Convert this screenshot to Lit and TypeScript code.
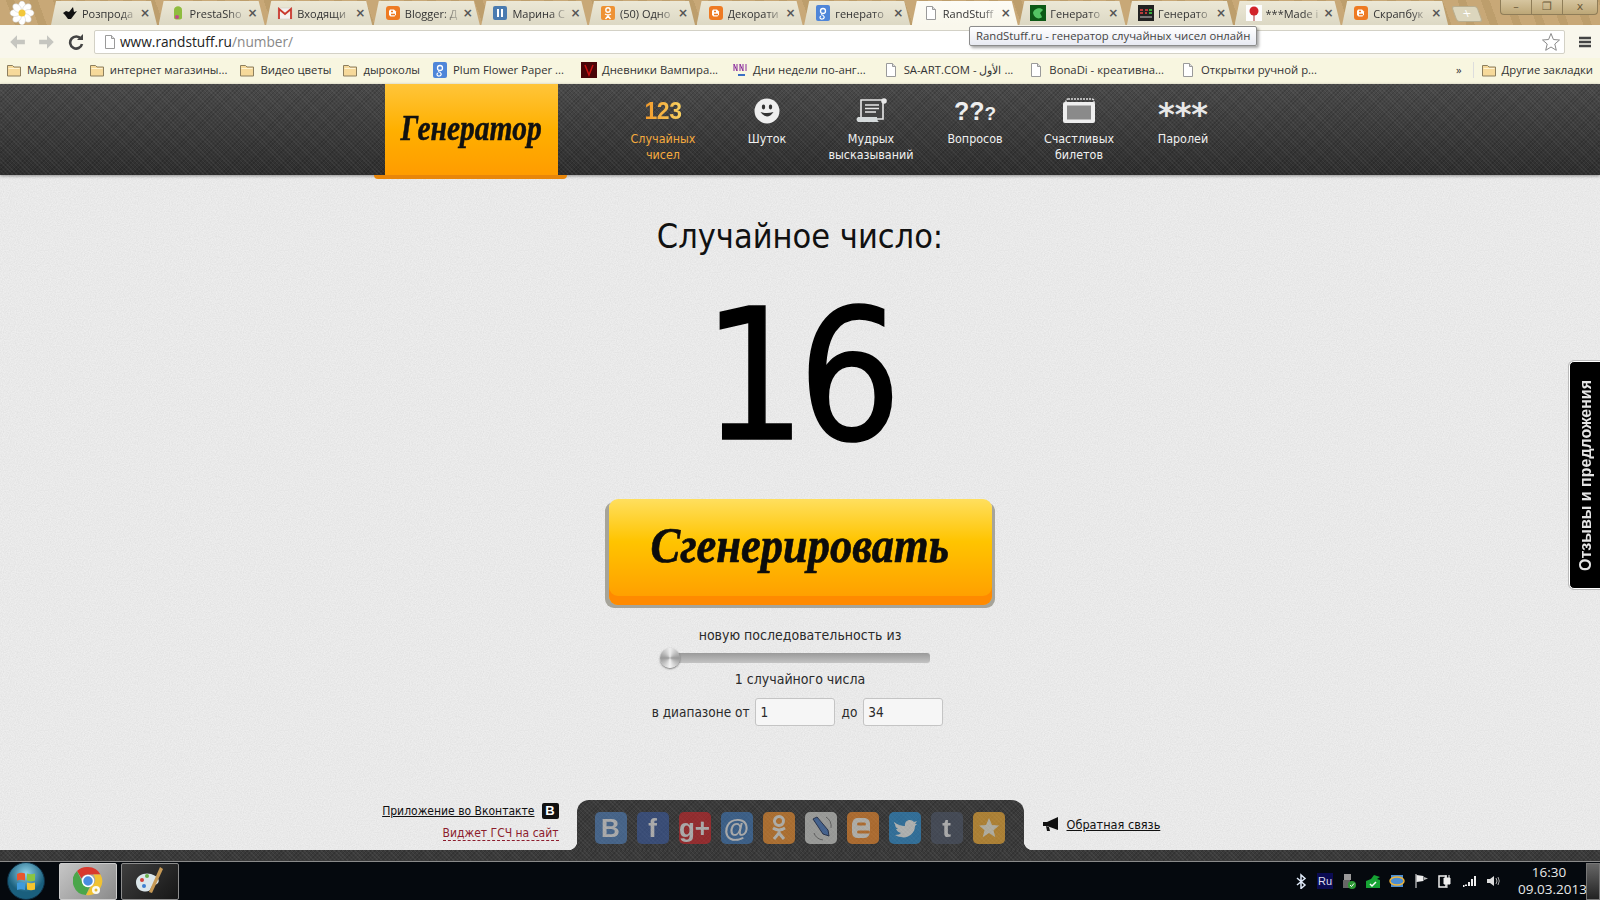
import { LitElement, css, html, svg } from 'lit';
import { customElement } from 'lit/decorators.js';

const doc = svg`<path d="M3.5 1.5h6l3 3v10h-9z" fill="#fff" stroke="#9a9a9a"/><path d="M9.5 1.5v3h3" fill="#ddd" stroke="#9a9a9a"/>`;
const blogger = svg`<rect x="1" y="1" width="14" height="14" rx="3" fill="#ee7a22"/><path d="M5 4.5h4l2 2v3l-1.5 2h-4L4 10V6z" fill="#fff"/><path d="M6 6.500h2M6 9.500h4" stroke="#ee7a22" stroke-width="1.300"/>`;

const favicons: Record<string, unknown> = {
  bird: svg`<path d="M1 8l3-2 3 1 4-5 1 5 3-1-3 4-3 4H6L3 10z" fill="#111"/>`,
  presta: svg`<path d="M4 5c0-5 8-5 8 0v8c0 2-8 2-8 0z" fill="#8fbc3e"/><circle cx="7" cy="12" r="2" fill="#c2488a"/>`,
  gmail: svg`<rect x="1" y="3" width="14" height="11" fill="#f4f0ee" stroke="#c9c2c0" stroke-width=".5"/><path d="M2 14V4l6 5 6-5v10" fill="none" stroke="#c9372c" stroke-width="1.800"/>`,
  blogger,
  pause: svg`<rect x="1" y="1" width="14" height="14" rx="2" fill="#4a7bb0"/><path d="M5 4h2v8H5zM9 4h2v8H9z" fill="#fff"/>`,
  ok: svg`<rect x="1" y="1" width="14" height="14" rx="2" fill="#ee9233"/><circle cx="8" cy="5" r="2.200" fill="none" stroke="#fff" stroke-width="1.400"/><path d="M5 9q3 2 6 0M8 10v1l-2.500 3M8 11l2.500 3" fill="none" stroke="#fff" stroke-width="1.400"/>`,
  google: svg`<rect x="1" y="0" width="14" height="16" rx="2" fill="#4f86d9"/><circle cx="8" cy="6" r="2.500" fill="none" stroke="#fff" stroke-width="1.300"/><path d="M6 9.500c4 1 4 4 1.500 4.500S4 12 6 11" fill="none" stroke="#fff" stroke-width="1.200"/>`,
  doc,
  green: svg`<rect x="0" y="0" width="16" height="16" fill="#0d5a16"/><path d="M3 8c1-5 8-6 10-3l-3 3 2 4c-3 3-8 1-9-4z" fill="#53c463"/>`,
  dark: svg`<rect x="0" y="0" width="16" height="16" fill="#222"/><path d="M2 5h3M2 8h3M7 5h3M7 8h2" stroke="#e44" stroke-width="1.500"/><path d="M11 5h3M11 8h3" stroke="#4d4" stroke-width="1.500"/><path d="M2 12h12" stroke="#ccc"/>`,
  balloon: svg`<rect x="0" y="0" width="16" height="16" fill="#fdfdfd"/><circle cx="8" cy="6" r="4.500" fill="#d2232a"/><path d="M8 10v6" stroke="#a33"/>`,
};

const folder = svg`<path d="M1.500 3.500h5l1.500 1.500h6.500v9h-13z" fill="#f6d99a" stroke="#8d7f5e"/><path d="M2.500 6.500h11" stroke="#fff3d0"/>`;

const tabs = [
  ['bird', 'Розпрода'], ['presta', 'PrestaSho'], ['gmail', 'Входящи'], ['blogger', 'Blogger: Д'],
  ['pause', 'Марина С'], ['ok', '(50) Одно'], ['blogger', 'Декорати'], ['google', 'генерато'],
  ['doc', 'RandStuff'], ['green', 'Генерато'], ['dark', 'Генерато'], ['balloon', '***Made i'], ['blogger', 'Скрапбук'],
];

const marks: [unknown, string, number][] = [
  [folder, 'Марьяна', 12], [folder, 'интернет магазины...', 12], [folder, 'Видео цветы', 11], [folder, 'дыроколы', 12],
  [favicons.google, 'Plum Flower Paper ...', 17], [svg`<rect x="0" y="0" width="16" height="16" fill="#4a0508"/><path d="M4 3l4 10 4-10" fill="none" stroke="#c11" stroke-width="1.500"/>`, 'Дневники Вампира...', 14],
  [svg`<path d="M2 2v7M5 2v7M2 2l3 7M8 2v7M11 2v7M8 2l3 7M14 2v7" stroke="#8a2a9c" fill="none"/><path d="M6 13h7" stroke="#3a6fc4" stroke-width="2"/>`, 'Дни недели по-анг...', 17], [doc, 'SA-ART.COM - الأول ...', 15],
  [doc, 'BonaDi - креативна...', 16], [doc, 'Открытки ручной р...', 0],
];

const socials: [string, string, unknown][] = [
  ['#4f7fb8', 'В', null], ['#3b5a9c', 'f', null], ['#c8272b', 'g+', null], ['#3f77b5', '@', null],
  ['#ee8f2e', '', svg`<circle cx="16" cy="9" r="4.500" fill="none" stroke="#f1f1ea" stroke-width="3"/><path d="M10 16q6 4 12 0M16 19v2l-5 6M16 21l5 6" fill="none" stroke="#f1f1ea" stroke-width="3"/>`],
  ['#d2d4d0', '', svg`<path d="M8 7l4-2 11 13 1 6-6-2z" fill="#4c7cc0" stroke="#1f2f55"/><path d="M21 5q6 4 5 11M9 21q2 6 9 7" fill="none" stroke="#777"/>`],
  ['#ef8a2c', '', svg`<path d="M10 6h8q5 1 5 6v8q-1 6-6 6h-6q-6 0-6-6v-8q1-6 5-6z" fill="#f3f1e8"/><path d="M11.500 12h6M11.500 20h10" stroke="#ef8a2c" stroke-width="3" stroke-linecap="round"/>`],
  ['#2f8fd0', '', svg`<path d="M5 10q5 4 11 4c-1-6 6-8 9-4l3-1-2 3 2 0-2 2c0 8-8 13-14 11-2 0-4-1-6-2 3 0 5-1 6-2-3-1-4-2-5-4h2c-2-1-3-3-3-5l2 1C5 12 5 11 5 10z" fill="#f2f6f4"/>`],
  ['#4c5566', 't', null],
  ['#f1ac35', '', svg`<path d="M16 6l3 7 7 .600-5.500 4.600 1.800 7L16 21l-6.300 4.200 1.800-7L6 13.600l7-.600z" fill="#f5f0dc"/>`],
];

const tray = [
  svg`<path d="M4 5l8 7-4 3.500V2l4 3.500L4 12" fill="none" stroke="#dfe9f8" stroke-width="1.500"/>`,
  svg`<rect x="0" y="0" width="16" height="16" fill="#0b0b52"/>`,
  svg`<rect x="3" y="1" width="7" height="6" fill="#999"/><rect x="2" y="7" width="7" height="8" fill="#666"/><circle cx="11" cy="12" r="4" fill="#2c9a34"/><path d="M9 12l1.500 1.500L13 10.500" stroke="#fff" fill="none"/>`,
  svg`<path d="M1 8l5-2 3-4 6 2-3 2 3 1v8H1z" fill="#16a334"/><path d="M5 11l2 2 4-4" stroke="#fff" stroke-width="1.500" fill="none"/>`,
  svg`<rect x="2" y="2" width="12" height="12" fill="#4c8ed2"/><ellipse cx="8" cy="8" rx="7" ry="4" fill="none" stroke="#f0b53a" stroke-width="1.500"/>`,
  svg`<path d="M3 1v14" stroke="#eee"/><path d="M3.500 2l7 1v5l-7 1z" fill="#eee"/><path d="M11 4l4 1.500L11 7z" fill="#bbb"/>`,
  svg`<path d="M2 3h7v11H2z" fill="none" stroke="#eee" stroke-width="1.500"/><path d="M7 5h6v6H7zM9 2v3M12 2v3M10 11v4" fill="#eee" stroke="#eee"/>`,
  svg`<path d="M2 13h1.500M5 13v-1.500M8 13V9M11 13V6M14 13V3" stroke="#eee" stroke-width="2"/>`,
  svg`<path d="M2 6h3l4-3v10L5 10H2z" fill="#ddd"/><path d="M11 5q2 3 0 6M13 4q2.500 4 0 8" stroke="#aaa" fill="none"/>`,
];

@customElement('app-root')
export class AppRoot extends LitElement {
  static styles = css`
    :host {
      display: flex;
      flex-direction: column;
      position: relative;
      width: 1600px;
      height: 900px;
      overflow: hidden;
      font-family: 'Open Sans', 'Liberation Sans', sans-serif;
      color: #222;
    }
    svg { display: block; flex: none; }

    /* browser chrome */
    .tabstrip {
      display: flex;
      height: 25px;
      flex: none;
      align-items: flex-end;
      background: repeating-linear-gradient(70deg, #c8a877 0 14px, #bd9e6c 14px 22px);
    }
    .flower { margin: 0 16px 0 9px; align-self: center; }
    .tab {
      flex: 0 0 107.6px;
      box-sizing: border-box;
      height: 24px;
      display: flex;
      align-items: center;
      gap: 4px;
      padding-left: 11px;
      font-size: 11px;
      color: #333;
      background: linear-gradient(#ece8d6, #dcd8c4);
      clip-path: polygon(5px 0, 100px 0, 106px 100%, 0 100%);
    }
    .tab.on { background: linear-gradient(#fdfcf6, #f9f7ec); }
    .tab .fav { width: 16px; height: 16px; }
    .title {
      width: 54px;
      white-space: nowrap;
      -webkit-mask-image: linear-gradient(90deg, #000 70%, rgba(0, 0, 0, 0.15));
      mask-image: linear-gradient(90deg, #000 70%, rgba(0, 0, 0, 0.15));
    }
    .close { font: bold 12px 'DejaVu Sans', sans-serif; color: #555; }
    .newtab {
      width: 24px;
      height: 14px;
      margin: 0 0 3px 4px;
      background: #dcd6bd;
      border: 1px solid #b9ae8f;
      border-radius: 3px;
      transform: skewX(20deg);
      font: 11px/13px 'DejaVu Sans', sans-serif;
      text-align: center;
      color: #fff;
    }
    .winbtns { margin: 0 2px 0 auto; align-self: flex-start; display: flex; height: 15px; }
    .winbtns span {
      width: 30px;
      border: 1px solid #8f7d58;
      border-top: 0;
      text-align: center;
      font: 11px/13px 'DejaVu Sans', sans-serif;
      color: #6b5a3a;
      background: linear-gradient(#d6c59f, #bda777);
    }
    .winbtns span:last-child { width: 34px; border-radius: 0 0 4px 0; }
    .winbtns span:first-child { border-radius: 0 0 0 4px; border-right: 0; }
    .winbtns span:nth-child(2) { border-right: 0; }

    .toolbar {
      height: 33px;
      flex: none;
      display: flex;
      align-items: center;
      background: #f9f7ec;
      padding: 0 8px;
      box-sizing: border-box;
    }
    .navbtn { margin-right: 12px; }
    .omnibox {
      flex: 1;
      height: 24px;
      margin-left: -2px;
      display: flex;
      align-items: center;
      gap: 2px;
      background: #fff;
      border: 1px solid #d3d1c6;
      border-radius: 2px;
      padding-left: 7px;
      font-size: 13.7px;
      box-sizing: border-box;
    }
    .omnibox i { font-style: normal; color: #888; }
    .omnibox svg:last-child { margin: 0 3px 0 auto; }
    .burger { margin-left: 13px; }

    .bookmarks {
      height: 26px;
      flex: none;
      box-sizing: border-box;
      display: flex;
      align-items: center;
      padding: 0 0 3px 6px;
      background: #f8f6e0;
      font-size: 11.3px;
      white-space: nowrap;
      color: #333;
    }
    .mark { display: flex; align-items: center; gap: 5px; }
    .more { margin-left: auto; }
    .others { display: flex; gap: 5px; align-items: center; margin: 0 7px 0 11px; padding-left: 7px; border-left: 1px solid #ddd; }

    .tooltip {
      position: absolute;
      left: 969px;
      top: 26px;
      height: 18px;
      padding: 0 6px;
      font-size: 11.3px;
      line-height: 18px;
      color: #444;
      background: linear-gradient(#fff, #e8eaf2);
      border: 1px solid #8c8c8c;
      border-radius: 2px;
      box-shadow: 2px 2px 3px rgba(0, 0, 0, 0.35);
      white-space: nowrap;
    }

    /* site */
    .carbon {
      background-color: #3a3a3a;
      background-image:
        repeating-linear-gradient(45deg, rgba(255, 255, 255, 0.05) 0 1px, transparent 1px 3px),
        repeating-linear-gradient(-45deg, rgba(0, 0, 0, 0.14) 0 1px, transparent 1px 3px);
    }
    header {
      height: 91px;
      flex: none;
      display: flex;
      justify-content: center;
      color: #f0f0f0;
      background-image:
        repeating-linear-gradient(45deg, rgba(255, 255, 255, 0.05) 0 1px, transparent 1px 3px),
        repeating-linear-gradient(-45deg, rgba(0, 0, 0, 0.14) 0 1px, transparent 1px 3px),
        linear-gradient(#4a4a4a, #2e2e2e);
      font-family: 'DejaVu Sans Condensed', 'Liberation Sans', sans-serif;
      box-shadow: 0 1px 3px rgba(0, 0, 0, 0.4);
      z-index: 1;
    }
    .hwrap { width: 960px; display: flex; }
    .logo {
      position: relative;
      width: 173px;
      margin-left: 65px;
      display: flex;
      align-items: center;
      justify-content: center;
      padding-bottom: 3px;
      box-sizing: border-box;
      background: linear-gradient(#ffc53a, #ffb000 50%, #ff9c00);
      color: #111;
      font: italic bold 36px 'Liberation Serif', serif;
      -webkit-text-stroke: 0.5px #111;
    }
    .logo span { transform: scaleX(0.82); }
    .logo::after {
      content: '';
      position: absolute;
      left: -11px;
      right: -9px;
      bottom: -4px;
      height: 4px;
      background: #e8860a;
      border-radius: 0 0 4px 4px;
    }
    nav { display: flex; margin-left: 53px; }
    .item {
      width: 104px;
      padding-top: 12px;
      text-align: center;
      font-size: 12.4px;
      line-height: 16px;
    }
    .item.on { color: #f6ab3e; }
    .ico { height: 30px; margin-bottom: 5px; display: flex; align-items: center; justify-content: center; }
    .n123 {
      font: bold 23px 'Liberation Sans', sans-serif;
      letter-spacing: -0.5px;
      background: linear-gradient(90deg, #f39a2a, #f8d060);
      -webkit-background-clip: text;
      background-clip: text;
      color: transparent;
    }
    .q { font: bold 25px 'Liberation Sans', sans-serif; color: #eee; display: flex; align-items: baseline; }
    .q span:last-child { font-size: 19px; }
    .stars { font: bold 32px/26px 'DejaVu Sans', sans-serif; color: #e8e8e8; height: 20px; }

    main {
      flex: 1;
      display: flex;
      flex-direction: column;
      align-items: center;
      font-family: 'DejaVu Sans Condensed', 'Liberation Sans', sans-serif;
      background-color: #eeeeee;
      background-image: url("data:image/svg+xml,%3Csvg xmlns='http://www.w3.org/2000/svg' width='240' height='240'%3E%3Cfilter id='n'%3E%3CfeTurbulence type='fractalNoise' baseFrequency='0.85' numOctaves='2' stitchTiles='stitch'/%3E%3CfeColorMatrix values='0 0 0 0 0.45 0 0 0 0 0.45 0 0 0 0 0.45 0.35 0 0 0 -0.09'/%3E%3C/filter%3E%3Crect width='240' height='240' filter='url(%23n)'/%3E%3C/svg%3E");
      color: #2a2a2a;
    }
    h1 { margin: 39px 0 0; font-size: 34px; line-height: 44px; font-weight: 400; color: #111; }
    .num {
      margin: 19px 0 0 -4px;
      font-size: 181px;
      line-height: 200px;
      letter-spacing: -8px;
      color: #000;
      -webkit-text-stroke: 1.5px #000;
    }
    .gen {
      width: 383px;
      height: 106px;
      margin-top: 22px;
      display: flex;
      align-items: center;
      justify-content: center;
      padding-bottom: 14px;
      box-sizing: border-box;
      font: italic bold 50px 'Liberation Serif', serif;
      -webkit-text-stroke: 0.7px #0c0c0c;
      color: #0c0c0c;
      border-radius: 9px;
      background: linear-gradient(#ffdf5e, #ffc400 40%, #ff9a00);
      box-shadow: inset 0 -9px 0 #ff8a00, 0 3px 0 #a6a49a, -4px 3px 0 #a6a49a, 3px 3px 0 #a6a49a;
    }
    .gen span { transform: scaleX(0.89); }
    .lbl { font-size: 14px; line-height: 18px; }
    .lbl.first { margin-top: 21px; }
    .track {
      position: relative;
      width: 268px;
      height: 10px;
      margin: 9px 8px 7px 0;
      border-radius: 3px;
      background: linear-gradient(#9a9a9a, #c3c3c3);
    }
    .thumb {
      position: absolute;
      left: -2px;
      top: -5px;
      width: 20px;
      height: 20px;
      border-radius: 50%;
      background: conic-gradient(#eee, #999, #f4f4f4, #999, #eee);
      box-shadow: 0 1px 2px rgba(0, 0, 0, 0.5);
    }
    .range { display: flex; align-items: center; gap: 6px; margin: 10px 5px 0 0; font-size: 13.5px; }
    .field {
      width: 80px;
      height: 28px;
      box-sizing: border-box;
      padding-left: 4px;
      line-height: 26px;
      background: #f6f6f6;
      border: 1px solid #c4c4c4;
      border-radius: 3px;
    }
    .foot {
      margin-top: auto;
      display: grid;
      grid-template-columns: 1fr 447px 1fr;
      column-gap: 18px;
      width: 100%;
      align-items: center;
    }
    .left { display: flex; flex-direction: column; align-items: flex-end; gap: 7px; font-size: 12px; padding-bottom: 6px; }
    .left a { display: flex; align-items: center; gap: 7px; color: #111; }
    .left u { text-decoration: underline; }
    .vk {
      width: 17px;
      height: 16px;
      background: #111;
      color: #fff;
      font: bold 13px/16px 'Liberation Sans', sans-serif;
      text-align: center;
      border-radius: 2px;
    }
    .widget { color: #8c1c2c; border-bottom: 1px dashed #8c1c2c; }
    .pill {
      position: relative;
      height: 50px;
      display: flex;
      gap: 10px;
      box-sizing: border-box;
      padding: 12px 0 0 18px;
      border-radius: 12px 12px 0 0;
    }
    .pill::before,
    .pill::after {
      content: '';
      position: absolute;
      bottom: 0;
      width: 9px;
      height: 9px;
    }
    .pill::before { left: -9px; background: radial-gradient(circle at 0 0, transparent 9px, #3a3a3a 9.5px); }
    .pill::after { right: -9px; background: radial-gradient(circle at 100% 0, transparent 9px, #3a3a3a 9.5px); }
    .soc {
      width: 32px;
      height: 32px;
      border-radius: 5px;
      opacity: 0.62;
      text-align: center;
      color: #eee;
      font: bold 26px/32px 'Liberation Sans', sans-serif;
      overflow: hidden;
    }
    .fb { display: flex; align-items: center; gap: 7px; font-size: 12.6px; padding-bottom: 2px; }
    .fb u { color: #111; }

    .feedback {
      position: absolute;
      right: -2px;
      top: 361px;
      width: 33px;
      height: 228px;
      box-sizing: border-box;
      display: flex;
      align-items: center;
      justify-content: center;
      background: #000;
      color: #e4e4e4;
      border: 1px solid #fff;
      outline: 1px solid #bbb;
      border-radius: 5px 0 0 5px;
      font: bold 16px 'Liberation Sans', sans-serif;
      writing-mode: vertical-rl;
    }
    .feedback span { transform: rotate(180deg); }

    .band { height: 11px; flex: none; }

    /* taskbar */
    .taskbar {
      height: 39px;
      flex: none;
      display: flex;
      align-items: center;
      box-sizing: border-box;
      border-top: 1px solid #8a8a8a;
      background: #05090e;
      color: #e8e8e8;
    }
    .orb { margin: 0 14px 0 7px; }
    .tbtn {
      width: 58px;
      height: 37px;
      box-sizing: border-box;
      margin-right: 4px;
      display: flex;
      align-items: center;
      justify-content: center;
      border: 1px solid #8d8d8d;
      border-radius: 2px;
      background: linear-gradient(135deg, #3e3e3e, #161616);
    }
    .tbtn.on { background: linear-gradient(135deg, #c6c6c6, #8a8a8a); border-color: #ccc; }
    .tray { margin-left: auto; display: flex; align-items: center; gap: 8px; }
    .clock { width: 62px; margin: 0 6px 0 17px; text-align: center; font-size: 13.5px; line-height: 17px; }
    .desk { width: 14px; height: 37px; background: linear-gradient(#666, #222); border: 1px solid #777; box-sizing: border-box; }
    .ru { position: relative; width: 16px; height: 16px; }
    .ru span { position: absolute; left: 0; top: 0; width: 16px; text-align: center; font: 11px/16px 'Liberation Sans', sans-serif; color: #dde; }
  `;

  private icon(body: unknown, size = 16, view = 16) {
    return html`<svg width=${size} height=${size} viewBox="0 0 ${view} ${view}">${body}</svg>`;
  }

  private renderChrome() {
    return html`
      <div class="tabstrip">
        <svg class="flower" width="26" height="24" viewBox="0 0 26 24">
          ${[0, 45, 90, 135, 180, 225, 270, 315].map(
            (a) => svg`<ellipse cx="13" cy="5" rx="3.500" ry="5" fill="#fff" stroke="#ccc" stroke-width=".5" transform="rotate(${a} 13 12)"/>`,
          )}
          <circle cx="13" cy="12" r="3.500" fill="#f2c73a"/>
        </svg>
        ${tabs.map(
          ([f, t], i) => html`
            <div class="tab ${i === 8 ? 'on' : ''}">
              <span class="fav">${this.icon(favicons[f])}</span>
              <span class="title">${t}</span>
              <span class="close">×</span>
            </div>
          `,
        )}
        <div class="newtab">+</div>
        <div class="winbtns"><span>–</span><span>❐</span><span>x</span></div>
      </div>
      <div class="toolbar">
        <span class="navbtn">${this.icon(svg`<path d="M2 8l6-6v4h7v4H8v4z" fill="#c6c6c0"/>`, 18)}</span>
        <span class="navbtn">${this.icon(svg`<path d="M14 8L8 2v4H1v4h7v4z" fill="#c6c6c0"/>`, 18)}</span>
        <span class="navbtn">${this.icon(svg`<path d="M13 5a6 6 0 1 0 1 5" fill="none" stroke="#444" stroke-width="2.600"/><path d="M9 6h6V0z" fill="#444"/>`, 16)}</span>
        <div class="omnibox">
          ${this.icon(doc)}
          <span>www.randstuff.ru<i>/number/</i></span>
          ${this.icon(svg`<path d="M10 1.500l2.400 6 6.100.500-4.700 4 1.500 6.300L10 15l-5.300 3.300 1.500-6.300-4.700-4 6.100-.500z" fill="#fff" stroke="#8a8a8a"/>`, 20, 20)}
        </div>
        <span class="burger">${this.icon(svg`<path d="M1 3h12M1 7h12M1 11h12" stroke="#444" stroke-width="2.400"/>`, 14, 14)}</span>
      </div>
      <div class="bookmarks">
        ${marks.map(
          ([ic, t, gap]) => html`
            <span class="mark" style="margin-right:${gap}px">${this.icon(ic)}<span>${t}</span></span>
          `,
        )}
        <span class="more">»</span>
        <span class="others">${this.icon(folder)}<span>Другие закладки</span></span>
      </div>
    `;
  }

  private renderHeader() {
    return html`
      <header>
        <div class="hwrap">
          <div class="logo"><span>Генератор</span></div>
          <nav>
            <div class="item on"><div class="ico"><span class="n123">123</span></div>Случайных<br />чисел</div>
            <div class="item">
              <div class="ico">
                <svg width="26" height="26" viewBox="0 0 26 26">
                  <circle cx="13" cy="13" r="12.500" fill="#eeeeee"/>
                  <ellipse cx="9.500" cy="9" rx="1.700" ry="2.400" fill="#333"/>
                  <ellipse cx="16.500" cy="9" rx="1.700" ry="2.400" fill="#333"/>
                  <path d="M6.500 14q6.500 9 13 0q-6.500 2-13 0z" fill="#333"/>
                </svg>
              </div>
              Шуток
            </div>
            <div class="item">
              <div class="ico">
                <svg width="32" height="26" viewBox="0 0 32 26">
                  <path d="M6 2h22v19H6z" fill="#444" stroke="#e8e8e8" stroke-width="1.600"/>
                  <circle cx="29" cy="3" r="2.800" fill="#e8e8e8"/>
                  <path d="M10 7h14M10 10.500h14M10 14h11" stroke="#e8e8e8" stroke-width="1.300"/>
                  <path d="M3 19h19q0 5 3 5H3q-3-2.500 0-5z" fill="#d5dadb"/>
                </svg>
              </div>
              Мудрых<br />высказываний
            </div>
            <div class="item"><div class="ico"><span class="q"><span>?</span><span>?</span><span>?</span></span></div>Вопросов</div>
            <div class="item">
              <div class="ico">
                <svg width="36" height="26" viewBox="0 0 36 26">
                  <rect x="5" y="1" width="28" height="20" rx="2" fill="none" stroke="#ddd" stroke-width="1.500" stroke-dasharray="2 1"/>
                  <rect x="2" y="4" width="32" height="21" rx="2" fill="#eee"/>
                  <rect x="6" y="7.500" width="24" height="14" fill="#8a8a8a"/>
                </svg>
              </div>
              Счастливых<br />билетов
            </div>
            <div class="item"><div class="ico"><span class="stars">***</span></div>Паролей</div>
          </nav>
        </div>
      </header>
    `;
  }

  private renderMain() {
    return html`
      <main>
        <h1>Случайное число:</h1>
        <div class="num">16</div>
        <div class="gen"><span>Сгенерировать</span></div>
        <div class="lbl first">новую последовательность из</div>
        <div class="track"><div class="thumb"></div></div>
        <div class="lbl">1 случайного числа</div>
        <div class="range">
          <span>в диапазоне от</span>
          <div class="field">1</div>
          <span>до</span>
          <div class="field">34</div>
        </div>
        <div class="foot">
          <div class="left">
            <a><u>Приложение во Вконтакте</u><span class="vk">B</span></a>
            <span class="widget">Виджет ГСЧ на сайт</span>
          </div>
          <div class="pill carbon">
            ${socials.map(
              ([c, t, ic]) => html`
                <div class="soc" style="background:${c}">
                  ${ic ? this.icon(ic, 32, 32) : t}
                </div>
              `,
            )}
          </div>
          <div class="fb">
            <svg width="18" height="16" viewBox="0 0 18 16">
              <path d="M1 6h4l11-5v13L5 10H1z" fill="#111"/>
              <path d="M4 10l1 5h3l-1-4" fill="#111"/>
            </svg>
            <u>Обратная связь</u>
          </div>
        </div>
      </main>
      <div class="feedback"><span>Отзывы и предложения</span></div>
      <div class="band carbon"></div>
    `;
  }

  private renderTaskbar() {
    return html`
      <div class="taskbar">
        <svg class="orb" width="38" height="38" viewBox="0 0 38 38">
          <defs>
            <radialGradient id="orb" cy="0.3">
              <stop offset="0" stop-color="#8fd3ea" />
              <stop offset="1" stop-color="#1a5f7d" />
            </radialGradient>
          </defs>
          <circle cx="19" cy="19" r="18.500" fill="url(#orb)" stroke="#0f2f44"/>
          <path d="M10 12q4-2 8-.500v7q-4-1.500-8 0z" fill="#e8552e"/>
          <path d="M20 11.500q4 1.500 8 0v7q-4 1.500-8 0z" fill="#8ac540"/>
          <path d="M10 21q4-1.500 8 0v7q-4-1.500-8 0z" fill="#3f9bdc"/>
          <path d="M20 20.500q4 1.500 8 0v7q-4 1.500-8 0z" fill="#f5c42e"/>
        </svg>
        <div class="tbtn on">
          <svg width="30" height="30" viewBox="0 0 30 30">
            <path d="M15 1a14 14 0 0 1 12.500 7.500H15a7 7 0 0 0-6.500 4L4 5A14 14 0 0 1 15 1z" fill="#d9392e"/>
            <path d="M4 5l5 10a7 7 0 0 0 8 5l-4 9A14 14 0 0 1 4 5z" fill="#4aa64a"/>
            <path d="M27.500 8.500A14 14 0 0 1 13 29l5-9a7 7 0 0 0 2-11.500z" fill="#f1c232"/>
            <circle cx="15" cy="15" r="5.500" fill="#4a8de0" stroke="#fff" stroke-width="1.500"/>
            <circle cx="23" cy="24" r="4" fill="#fbfbf2"/>
            <circle cx="23" cy="24" r="1.500" fill="#e3b82e"/>
          </svg>
        </div>
        <div class="tbtn">
          <svg width="32" height="30" viewBox="0 0 32 30">
            <path d="M2 16c0-7 9-10 15-8 7 2 10 7 6 10-3 2-5 1-6 4-1 4-5 4-9 3-4-1-6-5-6-9z" fill="#dbe6ea"/>
            <circle cx="8" cy="14" r="2" fill="#d0413a"/>
            <circle cx="13" cy="10" r="2" fill="#6ab04c"/>
            <circle cx="10" cy="20" r="2" fill="#3d7fd0"/>
            <path d="M26 1l3 2-11 24-3-1z" fill="#c79a56"/>
          </svg>
        </div>
        <div class="tray">
          ${tray.map((t, i) =>
            i === 1
              ? html`<div class="ru">${this.icon(t)}<span>Ru</span></div>`
              : this.icon(t),
          )}
        </div>
        <div class="clock">16:30<br />09.03.2013</div>
        <div class="desk"></div>
      </div>
    `;
  }

  render() {
    return html`
      ${this.renderChrome()}
      <div class="tooltip">RandStuff.ru - генератор случайных чисел онлайн</div>
      ${this.renderHeader()}
      ${this.renderMain()}
      ${this.renderTaskbar()}
    `;
  }
}
